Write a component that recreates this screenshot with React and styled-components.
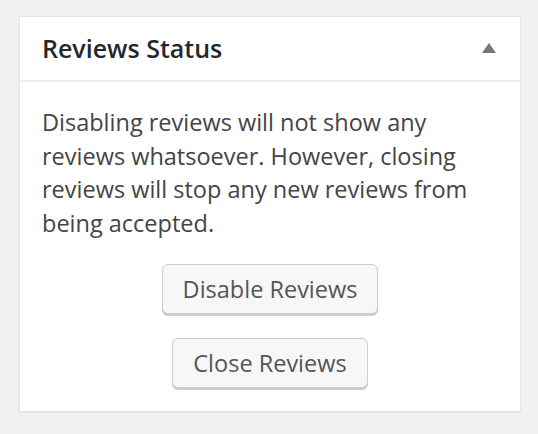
import React from 'react';
import styled, { createGlobalStyle } from 'styled-components';

const GlobalStyle = createGlobalStyle`
  html, body {
    margin: 0;
    padding: 0;
    background: #f1f1f1;
  }
  body {
    font-family: "Open Sans", "Liberation Sans", sans-serif;
  }
`;

const Page = styled.div`
  width: 538px;
  height: 434px;
  padding: 16px 17px 0 19px;
  box-sizing: border-box;
`;

const Panel = styled.div`
  background: #fff;
  border: 1px solid #e5e5e5;
  box-shadow: 0 1px 1px rgba(0, 0, 0, 0.04);
  height: 396px;
  box-sizing: border-box;
`;

const PanelHeader = styled.div`
  height: 65px;
  display: flex;
  align-items: center;
  justify-content: space-between;
  padding: 0 24px 2px 22px;
  border-bottom: 2px solid #eee;
  box-sizing: border-box;
`;

const Title = styled.h2`
  margin: 0;
  font-size: 25px;
  font-weight: 600;
  color: #23282d;
`;

const Toggle = styled.svg`
  width: 14px;
  height: 10px;
  fill: #72777c;
`;

const Body = styled.div`
  padding: 24px 22px 0;
`;

const Text = styled.p`
  margin: 0 0 24px;
  font-size: 23.5px;
  line-height: 33.5px;
  color: #444;
`;

const Actions = styled.div`
  display: flex;
  flex-direction: column;
  align-items: center;
  gap: 24px;
`;

const Button = styled.button`
  font-family: "Open Sans", "Liberation Sans", sans-serif;
  font-size: 23.5px;
  color: #555;
  background: #f7f7f7;
  border: 1px solid #ccc;
  border-radius: 6px;
  box-shadow: 0 2px 0 #ccc;
  height: 50px;
  padding: 0 20px;
  cursor: pointer;
`;

export default function App() {
  return (
    <>
      <GlobalStyle />
      <Page>
        <Panel>
          <PanelHeader>
            <Title>Reviews Status</Title>
            <Toggle viewBox="0 0 14 10">
              <polygon points="7,0 14,10 0,10" />
            </Toggle>
          </PanelHeader>
          <Body>
            <Text>
              Disabling reviews will not show any reviews whatsoever. However,
              closing reviews will stop any new reviews from being accepted.
            </Text>
            <Actions>
              <Button>Disable Reviews</Button>
              <Button>Close Reviews</Button>
            </Actions>
          </Body>
        </Panel>
      </Page>
    </>
  );
}
